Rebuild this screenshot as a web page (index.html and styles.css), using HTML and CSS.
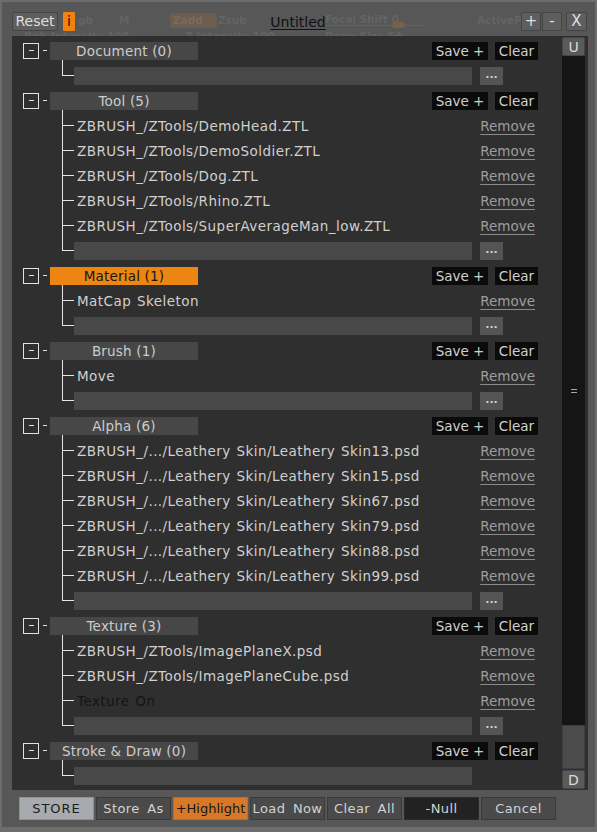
FILE: index.html
```html
<!DOCTYPE html>
<html>
<head>
<meta charset="utf-8">
<title>Untitled</title>
<link rel="stylesheet" href="styles.css">
</head>
<body>
<div class="window">
  <div class="topbar">
    <div class="ghost">
      <span class="g" style="left:76px;top:12px">gb</span>
      <span class="g" style="left:117px;top:12px">M</span>
      <span class="g gbox" style="left:168px;top:11px">Zadd</span>
      <span class="g" style="left:216px;top:12px">Zsub</span>
      <span class="g" style="left:323px;top:11px">Focal Shift 0</span>
      <span class="gline" style="left:323px;top:23px"></span>
      <span class="gknob" style="left:390px;top:20px"></span>
      <span class="g" style="left:475px;top:12px">ActiveP</span>
      <span class="g" style="left:22px;top:28px">Rgb Intensity 100</span>
      <span class="g" style="left:183px;top:28px">Z Intensity 100</span>
      <span class="g" style="left:323px;top:28px">Draw Size 64</span>
      <span class="gknob" style="left:390px;top:33px"></span>
    </div>
    <div class="top-row">
      <span class="tbtn reset">Reset</span>
      <span class="tbtn info">i</span>
      <span class="title">Untitled</span>
      <span class="tbtn small">+</span>
      <span class="tbtn small minus">-</span>
      <span class="tbtn small close">X</span>
    </div>
  </div>

  <div class="panel">
    <div class="list">

      <div class="row head">
        <span class="toggle"><span></span></span><span class="dash"></span>
        <span class="bar">Document (0)</span>
        <span class="bk save">Save +</span><span class="bk clear">Clear</span>
      </div>
      <div class="row child first last">
        <span class="branch"><span class="up"></span><span class="down"></span></span>
        <span class="field"></span><span class="dots">...</span>
      </div>

      <div class="row head">
        <span class="toggle"><span></span></span><span class="dash"></span>
        <span class="bar">Tool (5)</span>
        <span class="bk save">Save +</span><span class="bk clear">Clear</span>
      </div>
      <div class="row child first">
        <span class="branch"><span class="up"></span><span class="down"></span></span>
        <span class="item">ZBRUSH_/ZTools/DemoHead.ZTL</span><span class="remove">Remove</span>
      </div>
      <div class="row child">
        <span class="branch"><span class="up"></span><span class="down"></span></span>
        <span class="item">ZBRUSH_/ZTools/DemoSoldier.ZTL</span><span class="remove">Remove</span>
      </div>
      <div class="row child">
        <span class="branch"><span class="up"></span><span class="down"></span></span>
        <span class="item">ZBRUSH_/ZTools/Dog.ZTL</span><span class="remove">Remove</span>
      </div>
      <div class="row child">
        <span class="branch"><span class="up"></span><span class="down"></span></span>
        <span class="item">ZBRUSH_/ZTools/Rhino.ZTL</span><span class="remove">Remove</span>
      </div>
      <div class="row child">
        <span class="branch"><span class="up"></span><span class="down"></span></span>
        <span class="item">ZBRUSH_/ZTools/SuperAverageMan_low.ZTL</span><span class="remove">Remove</span>
      </div>
      <div class="row child last">
        <span class="branch"><span class="up"></span><span class="down"></span></span>
        <span class="field"></span><span class="dots">...</span>
      </div>

      <div class="row head">
        <span class="toggle"><span></span></span><span class="dash"></span>
        <span class="bar active">Material (1)</span>
        <span class="bk save">Save +</span><span class="bk clear">Clear</span>
      </div>
      <div class="row child first">
        <span class="branch"><span class="up"></span><span class="down"></span></span>
        <span class="item">MatCap Skeleton</span><span class="remove">Remove</span>
      </div>
      <div class="row child last">
        <span class="branch"><span class="up"></span><span class="down"></span></span>
        <span class="field"></span><span class="dots">...</span>
      </div>

      <div class="row head">
        <span class="toggle"><span></span></span><span class="dash"></span>
        <span class="bar">Brush (1)</span>
        <span class="bk save">Save +</span><span class="bk clear">Clear</span>
      </div>
      <div class="row child first">
        <span class="branch"><span class="up"></span><span class="down"></span></span>
        <span class="item">Move</span><span class="remove">Remove</span>
      </div>
      <div class="row child last">
        <span class="branch"><span class="up"></span><span class="down"></span></span>
        <span class="field"></span><span class="dots">...</span>
      </div>

      <div class="row head">
        <span class="toggle"><span></span></span><span class="dash"></span>
        <span class="bar">Alpha (6)</span>
        <span class="bk save">Save +</span><span class="bk clear">Clear</span>
      </div>
      <div class="row child first">
        <span class="branch"><span class="up"></span><span class="down"></span></span>
        <span class="item">ZBRUSH_/.../Leathery Skin/Leathery Skin13.psd</span><span class="remove">Remove</span>
      </div>
      <div class="row child">
        <span class="branch"><span class="up"></span><span class="down"></span></span>
        <span class="item">ZBRUSH_/.../Leathery Skin/Leathery Skin15.psd</span><span class="remove">Remove</span>
      </div>
      <div class="row child">
        <span class="branch"><span class="up"></span><span class="down"></span></span>
        <span class="item">ZBRUSH_/.../Leathery Skin/Leathery Skin67.psd</span><span class="remove">Remove</span>
      </div>
      <div class="row child">
        <span class="branch"><span class="up"></span><span class="down"></span></span>
        <span class="item">ZBRUSH_/.../Leathery Skin/Leathery Skin79.psd</span><span class="remove">Remove</span>
      </div>
      <div class="row child">
        <span class="branch"><span class="up"></span><span class="down"></span></span>
        <span class="item">ZBRUSH_/.../Leathery Skin/Leathery Skin88.psd</span><span class="remove">Remove</span>
      </div>
      <div class="row child">
        <span class="branch"><span class="up"></span><span class="down"></span></span>
        <span class="item">ZBRUSH_/.../Leathery Skin/Leathery Skin99.psd</span><span class="remove">Remove</span>
      </div>
      <div class="row child last">
        <span class="branch"><span class="up"></span><span class="down"></span></span>
        <span class="field"></span><span class="dots">...</span>
      </div>

      <div class="row head">
        <span class="toggle"><span></span></span><span class="dash"></span>
        <span class="bar">Texture (3)</span>
        <span class="bk save">Save +</span><span class="bk clear">Clear</span>
      </div>
      <div class="row child first">
        <span class="branch"><span class="up"></span><span class="down"></span></span>
        <span class="item">ZBRUSH_/ZTools/ImagePlaneX.psd</span><span class="remove">Remove</span>
      </div>
      <div class="row child">
        <span class="branch"><span class="up"></span><span class="down"></span></span>
        <span class="item">ZBRUSH_/ZTools/ImagePlaneCube.psd</span><span class="remove">Remove</span>
      </div>
      <div class="row child">
        <span class="branch"><span class="up"></span><span class="down"></span></span>
        <span class="item off">Texture On</span><span class="remove">Remove</span>
      </div>
      <div class="row child last">
        <span class="branch"><span class="up"></span><span class="down"></span></span>
        <span class="field"></span><span class="dots">...</span>
      </div>

      <div class="row head">
        <span class="toggle"><span></span></span><span class="dash"></span>
        <span class="bar">Stroke &amp; Draw (0)</span>
        <span class="bk save">Save +</span><span class="bk clear">Clear</span>
      </div>
      <div class="row child first last">
        <span class="branch"><span class="up"></span><span class="down"></span></span>
        <span class="field"></span>
      </div>

    </div>
    <div class="scroll">
      <span class="sbtn">U</span>
      <div class="thumb"><span class="grip"></span></div>
      <div class="track"></div>
      <span class="sbtn">D</span>
    </div>
  </div>

  <div class="bottom">
    <span class="bbtn store">STORE</span>
    <span class="bbtn">Store As</span>
    <span class="bbtn hl">+Highlight</span>
    <span class="bbtn">Load Now</span>
    <span class="bbtn">Clear All</span>
    <span class="bbtn null">-Null</span>
    <span class="bbtn">Cancel</span>
  </div>
</div>
</body>
</html>
```
FILE: styles.css
```css
html, body {
  margin: 0;
  padding: 0;
  background: #575757;
}
body {
  font-family: "DejaVu Sans", "Liberation Sans", sans-serif;
}
.window {
  width: 597px;
  height: 832px;
  box-sizing: border-box;
  border: 2px solid #6d6d6d;
  border-bottom-width: 5px;
  background: #575757;
  display: flex;
  flex-direction: column;
  overflow: hidden;
}

/* top bar */
.topbar {
  position: relative;
  height: 34px;
  flex: 0 0 34px;
}
.ghost {
  position: absolute;
  left: 0;
  top: 0;
  right: 0;
  height: 50px;
  pointer-events: none;
}
.g {
  position: absolute;
  font-size: 10.5px;
  line-height: 13px;
  font-weight: bold;
  color: #646464;
  white-space: nowrap;
}
.gbox {
  background: #6b5d50;
  color: #7b6a5a;
  width: 47px;
  height: 15px;
  line-height: 15px;
  padding-left: 3px;
  box-sizing: border-box;
  border-radius: 2px;
}
.gline {
  position: absolute;
  width: 100px;
  height: 1px;
  background: #616161;
}
.gknob {
  position: absolute;
  width: 13px;
  height: 6px;
  border-radius: 3px;
  background: #7a6048;
}
.top-row {
  position: relative;
  display: flex;
  align-items: flex-start;
  padding: 10px 8px 0 10px;
}
.tbtn {
  box-sizing: border-box;
  height: 19px;
  line-height: 17px;
  font-size: 14px;
  text-align: center;
  color: #dedede;
  background: #5e5e5e;
  border: 1px solid #444;
  border-radius: 2px;
}
.reset {
  width: 46px;
}
.info {
  width: 12px;
  margin-left: 5px;
  background: #f2820f;
  border-color: #f2820f;
  color: #111;
  border-radius: 1px;
}
.title {
  flex: 1;
  text-align: center;
  font-size: 14px;
  line-height: 20px;
  color: #111;
  text-decoration: underline;
  text-underline-offset: 2px;
}
.small {
  width: 20px;
  height: 19px;
  font-size: 15px;
  line-height: 17px;
}
.minus {
  margin-left: 1px;
}
.close {
  width: 21px;
  margin-left: 4px;
}

/* panel */
.panel {
  position: relative;
  z-index: 1;
  margin-left: 10px;
  width: 576px;
  height: 754px;
  flex: 0 0 754px;
  background: #2f2f2f;
  display: flex;
}
.list {
  width: 550px;
  padding-top: 2px;
}
.row {
  height: 25px;
  display: flex;
  align-items: center;
  font-size: 13.5px;
  white-space: nowrap;
}
.head {
  padding-left: 11px;
}
.toggle {
  box-sizing: border-box;
  width: 16px;
  height: 16px;
  border: 1px solid #e2e2e2;
  display: flex;
  align-items: center;
  justify-content: center;
}
.toggle span {
  width: 5px;
  height: 1px;
  background: #e2e2e2;
}
.dash {
  width: 4px;
  height: 1px;
  margin-left: 4px;
  background: #e2e2e2;
}
.bar {
  margin-left: 3px;
  width: 148px;
  height: 18px;
  line-height: 18px;
  background: #474747;
  color: #cccccc;
  text-align: center;
  letter-spacing: 0.2px;
}
.bar.active {
  background: #ec8512;
  color: #161616;
}
.bk {
  box-sizing: border-box;
  height: 18px;
  line-height: 18px;
  background: #0b0b0b;
  color: #cfcfcf;
  text-align: center;
}
.save {
  margin-left: auto;
  width: 56px;
}
.clear {
  width: 43px;
  margin-left: 7px;
  margin-right: 24px;
}
.child {
  padding-left: 50px;
}
.branch {
  align-self: flex-start;
  width: 12px;
  height: 25px;
  display: flex;
  flex-direction: column;
  flex: 0 0 12px;
}
.branch .up {
  flex: 0 0 12px;
  border-left: 1px solid #e6e6e6;
}
.branch .down {
  flex: 1;
  border-top: 1px solid #e6e6e6;
  border-left: 1px solid #e6e6e6;
}
.first .branch {
  margin-top: -3px;
  height: 28px;
}
.first .branch .up {
  flex-basis: 15px;
}
.last .branch .down {
  border-left: none;
}
.item {
  padding-left: 3px;
  color: #d0d0d0;
  letter-spacing: 0.45px;
  word-spacing: 1px;
}
.item.off {
  color: #151515;
}
.remove {
  margin-left: auto;
  margin-right: 27px;
  color: #9d9d9d;
  text-decoration: underline;
  text-underline-offset: 3px;
  text-decoration-color: #8a8a8a;
}
.field {
  width: 398px;
  height: 18px;
  background: #484848;
}
.dots {
  margin-left: 8px;
  width: 23px;
  height: 18px;
  line-height: 16px;
  background: #545454;
  color: #d0d0d0;
  font-size: 11px;
  font-weight: bold;
  text-align: center;
}

/* scrollbar */
.scroll {
  width: 23px;
  display: flex;
  flex-direction: column;
  padding-top: 1px;
}
.sbtn {
  box-sizing: border-box;
  height: 19px;
  flex: 0 0 19px;
  line-height: 18px;
  background: #5a5a5a;
  border: 1px solid #464646;
  border-radius: 2px;
  color: #dadada;
  font-size: 14px;
  text-align: center;
}
.thumb {
  flex: 0 0 669px;
  background: #151515;
  display: flex;
  align-items: center;
  justify-content: center;
}
.grip {
  width: 6px;
  height: 2px;
  border-top: 1px solid #a8a8a8;
  border-bottom: 1px solid #a8a8a8;
}
.track {
  flex: 0 0 44px;
  margin-bottom: 1px;
  box-sizing: border-box;
  background: #4b4b4b;
  border: 1px solid #3e3e3e;
}

/* bottom buttons */
.bottom {
  display: flex;
  gap: 2px;
  margin-top: 7px;
  padding-left: 17px;
}
.bbtn {
  box-sizing: border-box;
  width: 75px;
  height: 23px;
  line-height: 21px;
  background: #4a4a4a;
  border: 1px solid #3a3a3a;
  color: #d2d2d2;
  font-size: 13px;
  text-align: center;
  letter-spacing: 0.4px;
  word-spacing: 3px;
  white-space: nowrap;
}
.bbtn.store {
  background: #a7abaf;
  border-color: #8f9397;
  color: #1c1c1c;
  letter-spacing: 1px;
}
.bbtn.hl {
  background: #d8792a;
  border-color: #c06a22;
  color: #161616;
  letter-spacing: 0;
}
.bbtn.null {
  background: #222222;
  border-color: #2a2a2a;
}
```
